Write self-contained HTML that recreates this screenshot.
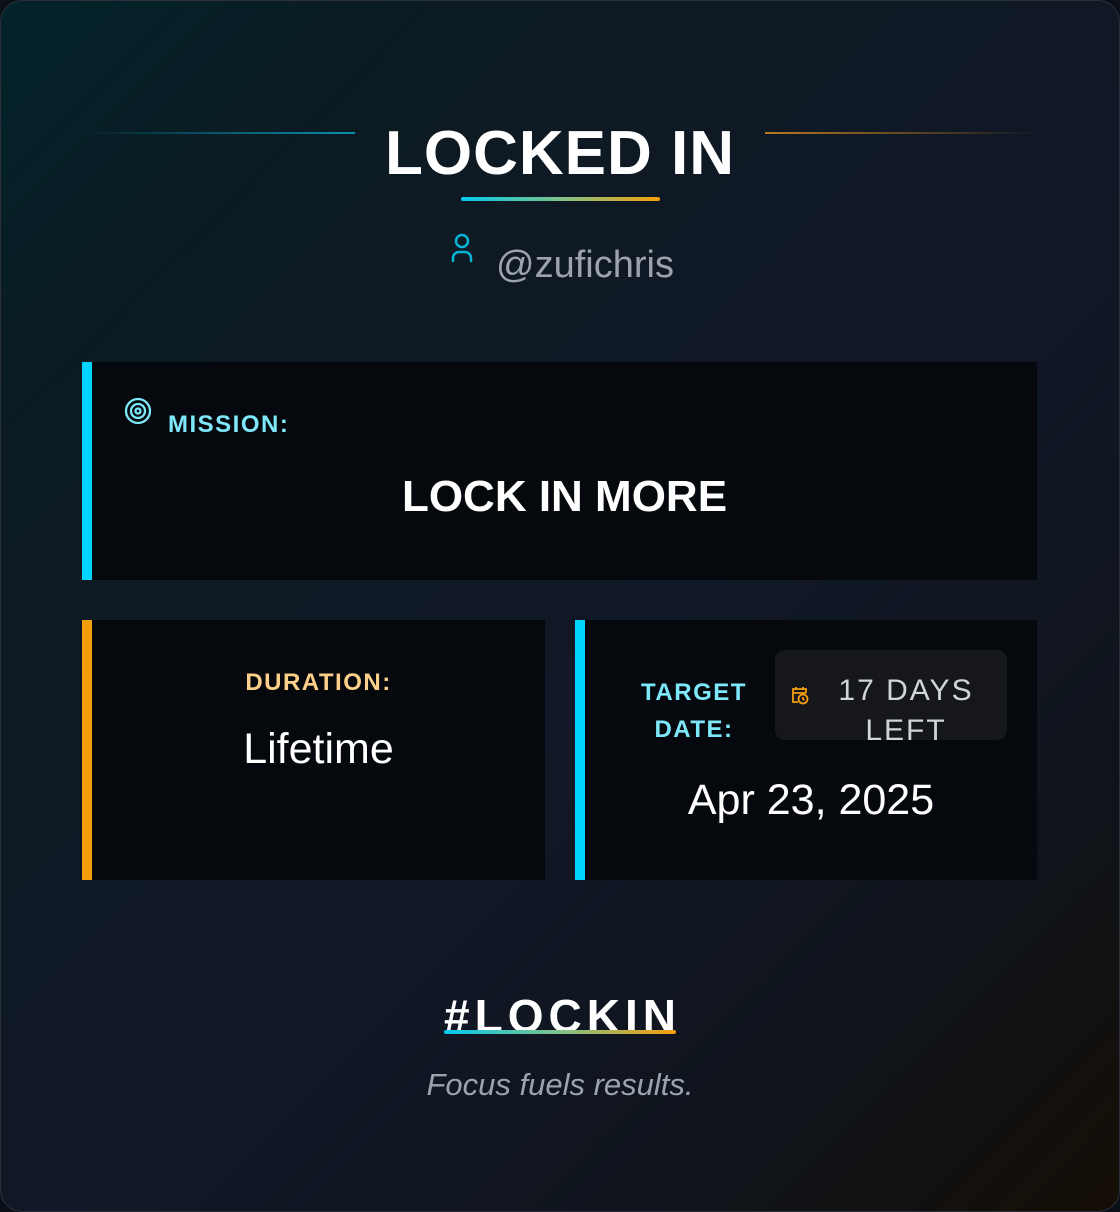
<!DOCTYPE html>
<html><head><meta charset="utf-8"><style>
*{margin:0;padding:0;box-sizing:border-box}
body{width:1120px;height:1212px;background:#0b0f17;font-family:"Liberation Sans",sans-serif;overflow:hidden}
.card{position:absolute;left:0;top:0;width:1120px;height:1212px;border-radius:22px;border:1px solid #2a2f3a;
background:linear-gradient(135deg,#03232a 0%,#0c1a22 20%,#111827 55%,#0f141c 80%,#150e05 100%);overflow:hidden}
.abs{position:absolute}
.c{text-align:center}
</style></head><body><div class="card">
<div class="abs" style="left:83px;top:131px;width:271px;height:2px;background:linear-gradient(90deg,transparent,#0891b2)"></div>
<div class="abs" style="left:764px;top:131px;width:272px;height:2px;background:linear-gradient(90deg,#b7791f,transparent)"></div>
<div class="abs c" style="left:-1px;width:1120px;top:115px;font-size:62px;font-weight:bold;color:#fff;letter-spacing:1px;line-height:76px">LOCKED IN</div>
<div class="abs" style="left:460px;top:196px;width:199px;height:4px;border-radius:2px;background:linear-gradient(90deg,#06c8ec,#7fc28a,#f59e0b)"></div>
<svg class="abs" style="left:449px;top:231px" width="26" height="32" viewBox="0 0 26 32" fill="none" stroke="#06b6d4" stroke-width="2.5" stroke-linecap="round"><circle cx="12" cy="9" r="6"/><path d="M3 29v-3a6 6 0 0 1 6-6h6a6 6 0 0 1 6 6v3"/></svg>
<div class="abs" style="left:495px;top:243px;font-size:38px;color:#9ca3af">@zufichris</div>

<div class="abs" style="left:81px;top:361px;width:955px;height:218px;background:#05080d;border-left:10px solid #00d4ff"></div>
<svg class="abs" style="left:122px;top:395px" width="30" height="30" viewBox="0 0 30 30" fill="none" stroke="#7ee8fa" stroke-width="2.3"><circle cx="15" cy="15" r="12"/><circle cx="15" cy="15" r="7"/><circle cx="15" cy="15" r="2.5"/></svg>
<div class="abs" style="left:167px;top:410px;font-size:24px;font-weight:bold;color:#7ee8fa;letter-spacing:1.5px">MISSION:</div>
<div class="abs c" style="left:91px;width:945px;top:471px;font-size:44px;font-weight:bold;color:#fff">LOCK IN MORE</div>

<div class="abs" style="left:81px;top:619px;width:463px;height:260px;background:#05080d;border-left:10px solid #f59e0b"></div>
<div class="abs c" style="left:91px;width:453px;top:668px;font-size:24px;font-weight:bold;color:#fcd08a;letter-spacing:1.5px">DURATION:</div>
<div class="abs c" style="left:91px;width:453px;top:724px;font-size:43px;color:#fff">Lifetime</div>

<div class="abs" style="left:574px;top:619px;width:462px;height:260px;background:#05080d;border-left:10px solid #00d4ff"></div>
<div class="abs c" style="left:629px;width:128px;top:673px;font-size:24px;font-weight:bold;color:#7ee8fa;letter-spacing:1.5px;line-height:37px">TARGET<br>DATE:</div>
<div class="abs" style="left:774px;top:649px;width:232px;height:90px;background:#15171b;border-radius:10px"></div>
<svg class="abs" style="left:789px;top:684px" width="20" height="20" viewBox="0 0 20 20" fill="none" stroke="#f59e0b" stroke-width="1.8"><path d="M8 17H3V4h13v4M3 8h13M6 2v3M13 2v3"/><circle cx="13" cy="14" r="4.5"/><path d="M13 12v2l1.5 1"/></svg>
<div class="abs c" style="left:819px;width:172px;top:670px;font-size:30px;color:#d1d5db;letter-spacing:2px;line-height:40px">17 DAYS<br>LEFT</div>
<div class="abs c" style="left:584px;width:452px;top:775px;font-size:43px;color:#fff">Apr 23, 2025</div>

<div class="abs c" style="left:-1px;width:1120px;top:989px;font-size:46px;font-weight:bold;color:#fff;letter-spacing:5px;line-height:52px;padding-left:5px">#LOCKIN</div>
<div class="abs" style="left:443px;top:1029px;width:232px;height:4px;border-radius:2px;background:linear-gradient(90deg,#06c8ec,#7fc28a,#f59e0b)"></div>
<div class="abs c" style="left:-1px;width:1120px;top:1066px;font-size:31px;font-style:italic;color:#9ca3af">Focus fuels results.</div>
</div></body></html>
